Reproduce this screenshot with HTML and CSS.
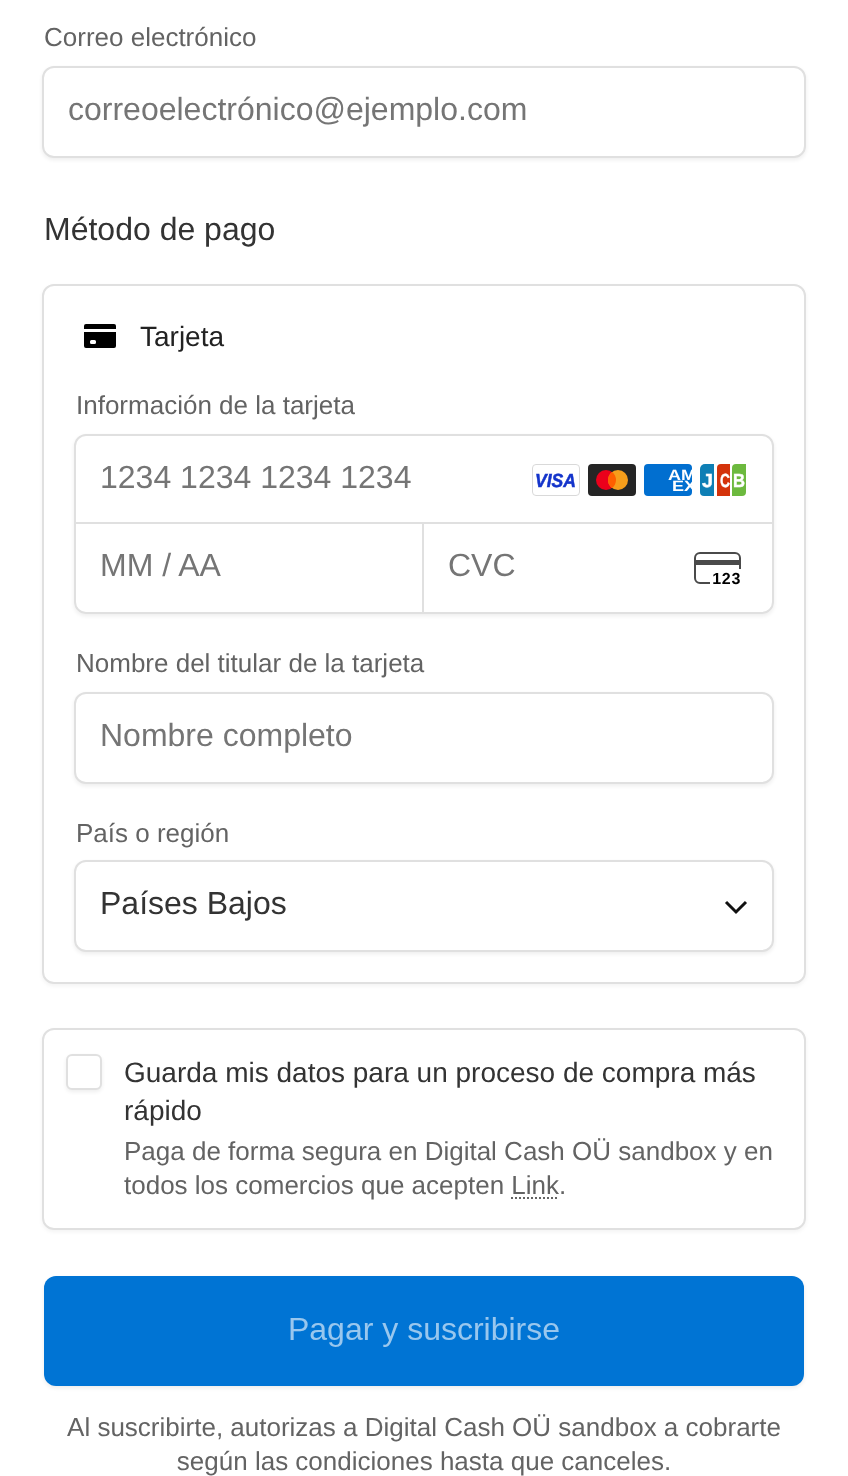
FILE: index.html
```html
<!DOCTYPE html>
<html lang="es">
<head>
<meta charset="utf-8">
<title>Pago</title>
<link rel="stylesheet" href="styles.css">
</head>
<body>
<main class="page">
  <div class="label label-email">Correo electrónico</div>
  <div class="field field-email placeholder">correoelectrónico@ejemplo.com</div>

  <h2 class="section-title">Método de pago</h2>

  <section class="card pay-card">
    <div class="tab">
      <svg class="tab-icon" width="32" height="24" viewBox="0 0 32 24"><path d="M2 0h28a2 2 0 0 1 2 2v3H0V2a2 2 0 0 1 2-2z" fill="#000"/><path fill-rule="evenodd" d="M0 8h32v14a2 2 0 0 1-2 2H2a2 2 0 0 1-2-2zM7.500 16a1.500 1.500 0 0 0-1.500 1.500v1a1.500 1.500 0 0 0 1.500 1.500h3a1.500 1.500 0 0 0 1.500-1.500v-1a1.500 1.500 0 0 0-1.500-1.500z" fill="#000"/></svg>
      <span class="tab-name">Tarjeta</span>
    </div>

    <div class="label label-inner">Información de la tarjeta</div>
    <div class="card-group">
      <div class="group-row number-row">
        <span class="placeholder">1234 1234 1234 1234</span>
        <div class="brands">
          <svg width="48" height="32" viewBox="0 0 48 32"><rect x=".5" y=".5" width="47" height="31" rx="3.500" fill="#fff" stroke="#d9d9d9"/><text x="3" y="23" textLength="41" lengthAdjust="spacingAndGlyphs" class="visa">VISA</text></svg>
          <svg width="48" height="32" viewBox="0 0 48 32"><rect width="48" height="32" rx="4" fill="#252525"/><circle cx="18" cy="16" r="10" fill="#eb001b"/><circle cx="30" cy="16" r="10" fill="#f79e1b"/><path d="M24 8a10 10 0 0 1 0 16 10 10 0 0 1 0-16z" fill="#ff5f00"/></svg>
          <svg width="48" height="32" viewBox="0 0 48 32"><rect width="48" height="32" rx="4" fill="#016fd0"/><text x="24" y="16" textLength="28" lengthAdjust="spacingAndGlyphs" class="amex">AM</text><text x="28" y="27" textLength="24" lengthAdjust="spacingAndGlyphs" class="amex">EX</text></svg>
          <svg width="46" height="32" viewBox="0 0 46 32"><path d="M5 0h9v32H4a4 4 0 0 1-4-4V5a5 5 0 0 1 5-5z" fill="#0e7fb5"/><path d="M21 0h9v32H17V4a4 4 0 0 1 4-4z" fill="#d4330b"/><path d="M36 0h10v28a4 4 0 0 1-4 4H32V4a4 4 0 0 1 4-4z" fill="#6cb93e"/><text x="2" y="23" textLength="11" lengthAdjust="spacingAndGlyphs" class="jcb">J</text><text x="20" y="23" textLength="10" lengthAdjust="spacingAndGlyphs" class="jcb">C</text><text x="33" y="23" textLength="12" lengthAdjust="spacingAndGlyphs" class="jcb">B</text></svg>
        </div>
      </div>
      <div class="group-split">
        <div class="group-row expiry"><span class="placeholder">MM / AA</span></div>
        <div class="group-row cvc">
          <span class="placeholder">CVC</span>
          <svg class="cvc-icon" width="48" height="36" viewBox="0 0 48 36"><path d="M16 31H6a5 5 0 0 1-5-5V6a5 5 0 0 1 5-5h35a5 5 0 0 1 5 5v11" fill="none" stroke="#4a4a4a" stroke-width="2"/><rect x="1" y="8" width="45" height="5" fill="#4a4a4a"/><text x="47" y="32" text-anchor="end" class="cvc-num">123</text></svg>
        </div>
      </div>
    </div>

    <div class="label label-inner label-name">Nombre del titular de la tarjeta</div>
    <div class="field field-inner placeholder">Nombre completo</div>

    <div class="label label-inner label-country">País o región</div>
    <div class="field field-inner field-select">
      <span>Países Bajos</span>
      <svg class="chevron" width="24" height="16" viewBox="0 0 24 16"><path d="M2 3l10 10L22 3" fill="none" stroke="#111" stroke-width="3"/></svg>
    </div>
  </section>

  <section class="card save-card">
    <span class="checkbox"></span>
    <div class="save-text">
      <div class="save-title">Guarda mis datos para un proceso de compra más rápido</div>
      <div class="save-sub">Paga de forma segura en Digital Cash OÜ sandbox y en todos los comercios que acepten <span class="link-word">Link</span>.</div>
    </div>
  </section>

  <button class="pay-button" type="button">Pagar y suscribirse</button>
  <p class="terms">Al suscribirte, autorizas a Digital Cash OÜ sandbox a cobrarte según las condiciones hasta que canceles.</p>
</main>
</body>
</html>
```

FILE: styles.css
```css
* { box-sizing: border-box; }
html, body { margin: 0; padding: 0; background: #fff; }
body { font-family: "Liberation Sans", Arial, sans-serif; color: #1a1a1a; height: 1476px; overflow: hidden; text-rendering: geometricPrecision; }
.page { padding: 21px 42px 0; display: flex; flex-direction: column; will-change: transform; }
.label { font-size: 26px; line-height: 32px; color: #636363; }
.label-email { margin: 0 0 13px 2px; }
.label-inner { margin: 0 0 13px 2px; }
.placeholder { color: #757575; }
.field { height: 92px; border: 2px solid #e0e0e0; border-radius: 12px; background: #fff; font-size: 32px; line-height: 38px; display: flex; align-items: center; box-shadow: 0 2px 4px rgba(0,0,0,.07); padding: 0 24px 6px; }
.section-title { margin: 51px 0 35px 2px; font-size: 32px; line-height: 40px; font-weight: 400; color: #333; }
.card { border: 2px solid #e0e0e0; border-radius: 12px; background: #fff; box-shadow: 0 2px 4px rgba(0,0,0,.05); }
.pay-card { height: 700px; padding: 0 30px; }
.tab { height: 100px; display: flex; align-items: center; padding-left: 10px; margin-bottom: 3px; }
.tab-icon { flex: none; }
.tab-name { margin: 2px 0 0 24px; font-size: 28px; line-height: 34px; color: #222; }
.card-group { height: 180px; border: 2px solid #e0e0e0; border-radius: 12px; box-shadow: 0 2px 4px rgba(0,0,0,.07); display: flex; flex-direction: column; }
.group-row { display: flex; align-items: center; justify-content: space-between; font-size: 32px; line-height: 38px; padding: 0 24px; }
.number-row { height: 88px; border-bottom: 2px solid #e0e0e0; padding: 0 26px 0 24px; }
.number-row > .placeholder { margin-bottom: 4px; }
.brands { display: flex; gap: 8px; margin-top: 1px; }
.brands svg { display: block; }
.group-split { flex: 1; display: flex; }
.expiry { width: 348px; border-right: 2px solid #e0e0e0; padding-bottom: 6px; }
.expiry .placeholder, .cvc .placeholder { display: block; }
.cvc { flex: 1; padding: 0 30px 6px 24px; }
.cvc-icon { display: block; margin-top: 10px; }
.visa { font: italic 700 19px "Liberation Sans", sans-serif; fill: #1434cb; stroke: #1434cb; stroke-width: .5px; }
.amex { font: 700 15px "Liberation Sans", sans-serif; fill: #fff; }
.jcb { font: 700 19px "Liberation Sans", sans-serif; fill: #fff; stroke: #fff; stroke-width: .4px; }
.cvc-num { font: 700 16px "Liberation Sans", sans-serif; fill: #000; letter-spacing: .7px; }
.label-name { margin-top: 33px; }
.field-inner { padding: 0 24px 6px; }
.label-country { margin-top: 33px; margin-bottom: 11px; }
.field-select { justify-content: space-between; color: #333; }
.chevron { margin: 8px 0 0 0; }
.save-card { margin-top: 44px; height: 202px; display: flex; padding: 24px 20px 0 22px; }
.checkbox { flex: none; width: 36px; height: 36px; border: 2px solid #e0e0e0; border-radius: 6px; box-shadow: 0 2px 4px rgba(0,0,0,.07); background: #fff; }
.save-text { margin-left: 22px; }
.save-title { font-size: 28px; line-height: 38px; color: #333; }
.save-sub { font-size: 26px; line-height: 34px; color: #636363; margin-top: 4px; }
.link-word { text-decoration: underline dotted #636363 2px; text-underline-offset: 3px; }
.pay-button { margin: 46px 2px 0; height: 110px; border: 0; border-radius: 12px; background: #0074d4; color: rgba(255,255,255,.6); font: 32px/38px "Liberation Sans", Arial, sans-serif; padding: 0 0 4px; box-shadow: 0 2px 4px rgba(0,0,0,.08); }
.terms { margin: 24px 0 0; font-size: 26px; line-height: 34px; color: #636363; text-align: center; }
```
